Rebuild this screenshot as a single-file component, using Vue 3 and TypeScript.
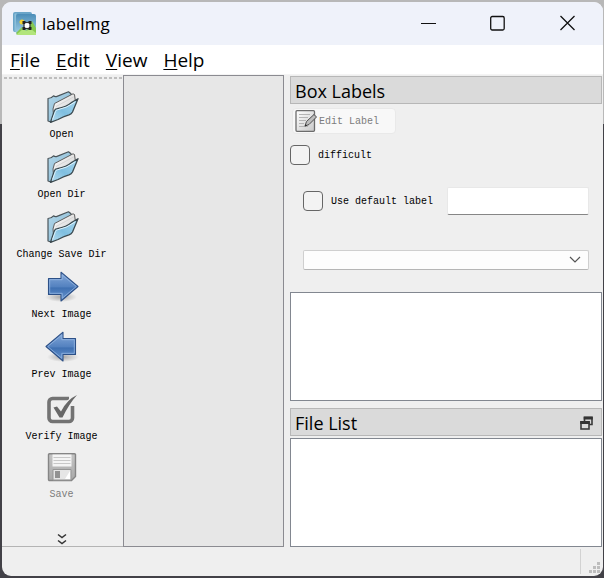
<script setup lang="ts">
import { ref } from 'vue'

type IconKind = 'folder' | 'next' | 'prev' | 'verify' | 'save'

interface Tool {
  label: string
  icon: IconKind
  disabled?: boolean
}

const menus: string[] = ['File', 'Edit', 'View', 'Help']

const tools: Tool[] = [
  { label: 'Open', icon: 'folder' },
  { label: 'Open Dir', icon: 'folder' },
  { label: 'Change Save Dir', icon: 'folder' },
  { label: 'Next Image', icon: 'next' },
  { label: 'Prev Image', icon: 'prev' },
  { label: 'Verify Image', icon: 'verify' },
  { label: 'Save', icon: 'save', disabled: true },
]

const difficult = ref(false)
const useDefault = ref(false)
const defaultLabel = ref('')
const filter = ref('')
</script>

<template>
  <div class="desktop">
    <div class="window">
      <header class="titlebar">
        <svg class="app-icon" viewBox="0 0 24 24" aria-hidden="true">
          <defs>
            <linearGradient id="sky" x1="0" y1="0" x2="0" y2="1">
              <stop offset="0" stop-color="#4b8db8" />
              <stop offset="1" stop-color="#a5d3e8" />
            </linearGradient>
            <linearGradient id="backBlue" x1="0" y1="0" x2="1" y2="1">
              <stop offset="0" stop-color="#b4d8ea" />
              <stop offset="1" stop-color="#7fb4d0" />
            </linearGradient>
            <linearGradient id="frontBlue" x1="0" y1="1" x2="1" y2="0">
              <stop offset="0" stop-color="#b9def0" />
              <stop offset="0.45" stop-color="#7fbfe0" />
              <stop offset="1" stop-color="#a9d7ee" />
            </linearGradient>
            <linearGradient id="paper" x1="0" y1="0" x2="1" y2="1">
              <stop offset="0" stop-color="#ffffff" />
              <stop offset="1" stop-color="#c9c9c9" />
            </linearGradient>
            <linearGradient id="arrow" x1="0" y1="0" x2="0" y2="1">
              <stop offset="0" stop-color="#87aada" />
              <stop offset="0.5" stop-color="#5482c0" />
              <stop offset="0.55" stop-color="#3f70b2" />
              <stop offset="1" stop-color="#6b98d0" />
            </linearGradient>
            <linearGradient id="metal" x1="0" y1="0" x2="0" y2="1">
              <stop offset="0" stop-color="#c4c4c4" />
              <stop offset="1" stop-color="#a9a9a9" />
            </linearGradient>
            <radialGradient id="shade">
              <stop offset="0" stop-color="#000" stop-opacity="0.3" />
              <stop offset="1" stop-color="#000" stop-opacity="0" />
            </radialGradient>
          </defs>
          <rect x="0" y="0" width="19" height="20" rx="2" fill="#6aa5c8" />
          <path d="M1.500 2v17l2 2V1z" fill="#8dc0da" />
          <rect x="3" y="2" width="20" height="21" rx="2" fill="url(#sky)" />
          <circle cx="9" cy="10" r="2.500" fill="#f2d12e" />
          <path d="M3 21l6-6 4 4 6-10 4 7v5a2 2 0 0 1-2 2H5z" fill="#86c850" />
          <path d="M3 23l7-6 3 2 5-2 5 4v2z" fill="#b2e57c" />
          <rect x="11" y="10.500" width="6" height="6" fill="#f4f4f4" stroke="#333" stroke-width="1.200" />
          <path d="M9.500 9h3v3h-3zM15.500 9h3v3h-3zM9.500 15h3v3h-3zM15.500 15h3v3h-3z" fill="#222" />
          <path d="M12 11.500h4v4h-4z" fill="#fff" />
        </svg>
        <h1 class="title">labelImg</h1>
        <div class="controls">
          <button type="button" aria-label="Minimize">
            <svg viewBox="0 0 16 16"><path class="hair" d="M1 8.500h15" /></svg>
          </button>
          <button type="button" aria-label="Maximize">
            <svg viewBox="0 0 16 16"><rect x="0.700" y="1.500" width="13.500" height="13.500" rx="1.500" /></svg>
          </button>
          <button type="button" aria-label="Close">
            <svg viewBox="0 0 16 16"><path d="M0.500 1l14 14M14.500 1L0.500 15" /></svg>
          </button>
        </div>
      </header>

      <nav class="menubar">
        <button v-for="m in menus" :key="m" type="button"><u>{{ m.charAt(0) }}</u>{{ m.slice(1) }}</button>
      </nav>

      <main class="content">
        <aside class="toolbar">
          <div class="handle"></div>
          <div class="tools">
            <button v-for="t in tools" :key="t.label" type="button" class="tool" :disabled="t.disabled">
              <svg v-if="t.icon === 'folder'" class="tool-icon" viewBox="0 0 32 32" aria-hidden="true">
                <path d="M2 7.500q3.500-.3 5.500-2.700 1.500 1.400 3.500.6L22.500.8l2.500 2L26 10 5 31l-3-1z" fill="url(#backBlue)" stroke="#4a5459" stroke-width="1.200" stroke-linejoin="round" />
                <path d="M7 18l1.500-5.500L27 2.800l1.500.7 1.200 9-22 14z" fill="url(#paper)" stroke="#5d5d5d" />
                <path d="M10 15.500L27.500 6" stroke="#d6d6d6" />
                <path d="M4.500 31.300L8.300 20q.7-2 3-2.300 9-1.500 15-6.700l5.700-3.300L26.500 21q-1 2-3.500 2.800-6 1.700-11 4.700z" fill="url(#frontBlue)" stroke="#3c4a50" stroke-width="1.300" stroke-linejoin="round" />
                <path d="M6.500 28.500l3-8.200q.5-1.300 2-1.500 9-1.500 17.500-7.800" fill="none" stroke="#dff3fc" stroke-width="1" />
              </svg>
              <svg v-else-if="t.icon === 'next' || t.icon === 'prev'" class="tool-icon" :class="t.icon" viewBox="0 0 32 32" aria-hidden="true">
                <ellipse cx="15" cy="26" rx="16" ry="5" fill="url(#shade)" />
                <path d="M2.500 7.500h12.500V1.200L32 15.500 15 30v-6.500H2.500z" fill="url(#arrow)" stroke="#2c5087" stroke-width="1.100" stroke-linejoin="round" />
                <path d="M3.700 22.300V8.700h12.500V4L30.300 15.500 16.200 27.300v-5z" fill="none" stroke="#94b6e2" stroke-width="0.800" />
              </svg>
              <svg v-else-if="t.icon === 'verify'" class="tool-icon verify" viewBox="0 0 32 34" aria-hidden="true">
                <path d="M23 7.500H6.500a3.500 3.500 0 0 0-3.500 3.500v16a3.500 3.500 0 0 0 3.500 3.500H23a3.500 3.500 0 0 0 3.500-3.500V15" fill="none" stroke="#737373" stroke-width="3.600" />
                <path d="M7.500 16.500l3.500-1 4 5Q21 8.500 31 4 23 13 16.500 26.500h-3z" fill="#686868" stroke="#efefef" stroke-width="2" paint-order="stroke" />
              </svg>
              <svg v-else class="tool-icon save" viewBox="0 0 32 30" aria-hidden="true">
                <path d="M3.500.8h25a1 1 0 0 1 1 1v21.700l-4 4h-22a1 1 0 0 1-1-1V1.800a1 1 0 0 1 1-1z" fill="url(#metal)" stroke="#858585" stroke-width="1.400" />
                <path d="M6.500 1.500h19v12h-19z" fill="#f4f4f4" />
                <path d="M7.500 4.500h17M7.500 7.500h17M7.500 10.500h17" stroke="#c8c8c8" />
                <path d="M7 16.500h18V27H7z" fill="#e6e6e6" stroke="#969696" />
                <path d="M9 18h5v7H9z" fill="#929292" />
                <path d="M19 26l5-8v8z" fill="#fff" />
              </svg>
              <span>{{ t.label }}</span>
            </button>
          </div>
          <button type="button" class="more" aria-label="More tools">
            <svg viewBox="0 0 10 12"><path d="M1 1.500l4 3 4-3M1 7.500l4 3 4-3" fill="none" stroke="#333" stroke-width="1.500" /></svg>
          </button>
        </aside>

        <section class="canvas" aria-label="Image"></section>

        <aside class="docks">
          <h2 class="dock-title">Box Labels</h2>
          <div class="box-labels">
            <button type="button" class="edit" disabled>
              <svg viewBox="0 0 22 22" aria-hidden="true">
                <rect x="1" y="0.700" width="18.500" height="20.600" rx="1" fill="url(#paper)" stroke="#6c6c6c" stroke-width="1.300" />
                <path d="M4 4.500h11M4 7.500h9M4 10.500h7M4 13.500h5M4 16.500h9" stroke="#b4b4b4" />
                <path d="M10 16l1.500-4.500 7.500-7 2.500 2.500-7.500 7.500z" fill="#bdbdbd" stroke="#4d4d4d" />
                <path d="M9.500 16.500l1.500-2 1 1z" fill="#222" />
              </svg>
              <span>Edit Label</span>
            </button>
            <label class="check difficult"><input v-model="difficult" type="checkbox" /><span>difficult</span></label>
            <div class="default-row">
              <label class="check"><input v-model="useDefault" type="checkbox" /><span>Use default label</span></label>
              <input v-model="defaultLabel" class="text" type="text" aria-label="Default label" />
            </div>
            <div class="combo">
              <select v-model="filter" aria-label="Label filter"><option value=""></option></select>
              <svg viewBox="0 0 12 8" aria-hidden="true"><path d="M1 1l5 5 5-5" fill="none" stroke="#555" stroke-width="1.200" /></svg>
            </div>
          </div>
          <div class="list" role="listbox" aria-label="Box labels"></div>
          <h2 class="dock-title file-title">
            File List
            <button type="button" aria-label="Float panel">
              <svg viewBox="0 0 13 14">
                <path d="M4.500 5V1.500h7.500V8.500H9" fill="none" stroke="#3a3a3a" stroke-width="1.600" />
                <path d="M3.700 2h9" stroke="#333" stroke-width="3" />
                <rect x="1" y="6" width="8" height="7" fill="#dadada" stroke="#3a3a3a" stroke-width="1.600" />
                <path d="M.2 6.500h9.600" stroke="#333" stroke-width="3" />
              </svg>
            </button>
          </h2>
          <div class="list" role="listbox" aria-label="Files"></div>
        </aside>
      </main>

      <footer class="statusbar">
        <div class="divider"></div>
        <svg class="grip" viewBox="0 0 12 12" aria-hidden="true">
          <path d="M8 0h3v3H8zM4 4h3v3H4zM8 4h3v3H8zM0 8h3v3H0zM4 8h3v3H4zM8 8h3v3H8z" fill="#bdbdbd" />
        </svg>
      </footer>
    </div>
  </div>
</template>

<style>
body {
  margin: 0;
}
</style>

<style scoped>
* {
  box-sizing: border-box;
}

button {
  padding: 0;
  border: 0;
  background: none;
  color: #000;
  font: inherit;
}

svg {
  display: block;
}

.desktop {
  display: flex;
  min-height: 100vh;
  padding: 2px 1px 2px 2px;
  background: linear-gradient(#b8b8b8 0 124px, #424147 124px);
  color: #000;
  font-family: 'Liberation Mono', monospace;
  font-size: 10px;
  line-height: 12px;
}

.window {
  display: flex;
  flex: 1;
  flex-direction: column;
  overflow: hidden;
  border-radius: 9px;
  background: #efefef;
}

.titlebar {
  display: flex;
  align-items: center;
  height: 43px;
  padding-left: 11px;
  background: #eff2fa;
}

.app-icon {
  width: 24px;
  height: 24px;
}

.title {
  flex: 1;
  margin: 0 0 0 5px;
  font: 17px/24px 'Open Sans', sans-serif;
}

.controls {
  display: flex;
}

.controls button {
  display: grid;
  width: 70px;
  height: 43px;
  padding-bottom: 2px;
  place-items: center;
}

.controls svg {
  width: 16px;
  height: 16px;
  fill: none;
  stroke: #111;
  stroke-width: 1.3;
}

.controls .hair {
  stroke-width: 1;
}

.menubar {
  display: flex;
  gap: 16px;
  height: 30px;
  padding: 0 8px;
  border-bottom: 1px solid #f4f4f4;
  background: #fff;
  font: 19px/30px 'Open Sans', sans-serif;
}

.menubar u {
  text-decoration-thickness: 1px;
  text-underline-offset: 2px;
}

.content {
  display: grid;
  flex: 1;
  grid-template-columns: 121px minmax(120px, 161px) minmax(312px, 1fr);
}

.toolbar {
  display: flex;
  flex-direction: column;
  border-bottom: 1px solid #b4b4b4;
}

.handle {
  height: 4px;
  background: repeating-linear-gradient(90deg, #bebebe 0 3px, #efefef 3px 5px) 2px 2px / 100% 2px no-repeat;
}

.tools {
  display: flex;
  flex-direction: column;
  padding: 7px 2px 0 0;
}

.tool {
  display: flex;
  flex-direction: column;
  align-items: center;
  gap: 6px;
  padding: 5px 0;
  white-space: nowrap;
}

.tool:disabled,
.edit:disabled {
  color: #7c7c7c;
}

.tool-icon {
  width: 32px;
  height: 32px;
  overflow: visible;
}

.tool-icon.prev {
  transform: scaleX(-1);
}

.tool-icon.verify {
  height: 34px;
}

.tool-icon.save {
  height: 30px;
}

.more {
  display: grid;
  height: 14px;
  margin-top: auto;
  padding-right: 2px;
  place-items: center;
}

.more svg {
  width: 10px;
  height: 12px;
}

.canvas {
  border: 1px solid #8b8b91;
  background: #e7e7e7;
}

.docks {
  display: flex;
  flex-direction: column;
  padding: 1px 1px 0 6px;
}

.dock-title {
  display: flex;
  align-items: center;
  justify-content: space-between;
  height: 28px;
  margin: 0;
  padding: 2px 8px 0 4px;
  border: 1px solid #b7b7b7;
  background: #dadada;
  font: 18px/26px 'Open Sans', sans-serif;
}

.file-title {
  margin: 7px 0 2px;
}

.dock-title svg {
  width: 13px;
  height: 14px;
}

.box-labels {
  display: flex;
  flex-direction: column;
  padding: 4px 0 22px;
}

.edit {
  display: flex;
  gap: 2px;
  align-items: center;
  align-self: flex-start;
  height: 26px;
  margin-left: 2px;
  padding: 0 16px 0 2px;
  border: 1px solid #e9e9e9;
  border-radius: 4px;
  background: #f8f8f8;
}

.edit svg {
  width: 22px;
  height: 22px;
}

.edit span,
.check span {
  padding-top: 2px;
}

.check {
  display: flex;
  gap: 8px;
  align-items: center;
}

.check input {
  width: 20px;
  height: 20px;
  margin: 0;
  border: 1px solid #666;
  border-radius: 4px;
  appearance: none;
  background: #f3f3f3;
}

.check input:checked {
  background: #3769ac;
}

.difficult {
  align-self: flex-start;
  margin-top: 11px;
}

.default-row {
  display: flex;
  gap: 14px;
  align-items: center;
  margin: 22px 13px 0;
}

.text {
  flex: 1;
  min-width: 0;
  height: 28px;
  padding: 0 6px;
  border: 1px solid #e8e8e8;
  border-bottom-color: #868686;
  border-radius: 2px;
  background: #fff;
  font: inherit;
}

.combo {
  display: grid;
  align-items: center;
  margin: 35px 13px 0;
}

.combo select,
.combo svg {
  grid-area: 1 / 1;
}

.combo select {
  width: 100%;
  height: 20px;
  padding: 0 24px 0 6px;
  border: 1px solid #cfcfcf;
  border-bottom-color: #b5b5b5;
  border-radius: 2px;
  appearance: none;
  background: #fdfdfd;
  font: inherit;
}

.combo svg {
  justify-self: end;
  width: 12px;
  height: 8px;
  margin-right: 8px;
  pointer-events: none;
}

.list {
  flex: 1;
  border: 1px solid #828790;
  background: #fff;
}

.statusbar {
  display: flex;
  gap: 8px;
  align-items: flex-end;
  justify-content: flex-end;
  height: 29px;
  padding: 2px 2px 2px 0;
}

.divider {
  width: 1px;
  height: 25px;
  background: #d2d2d2;
}

.grip {
  width: 12px;
  height: 12px;
}
</style>
